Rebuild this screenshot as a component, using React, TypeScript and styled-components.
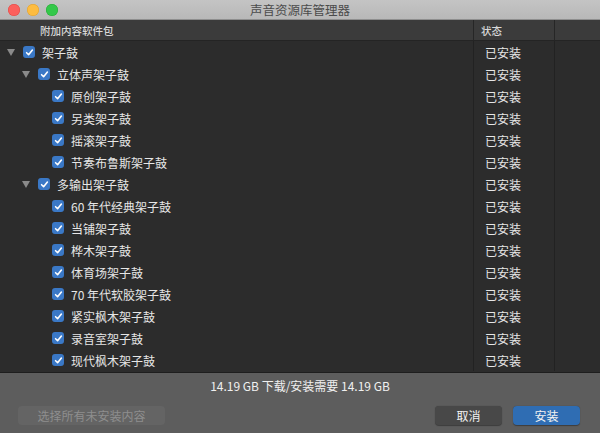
import React from "react";
import styled, { createGlobalStyle } from "styled-components";

const Global = createGlobalStyle`
  html, body { margin: 0; padding: 0; background: #2b2b2b; }
  body { font-family: "Noto Sans CJK SC", "Noto Sans", sans-serif; }
`;

const Window = styled.div`
  width: 600px;
  height: 433px;
  display: flex;
  flex-direction: column;
  overflow: hidden;
  background: #2c2c2c;
`;

const TitleBar = styled.div`
  height: 20px;
  flex: none;
  display: flex;
  align-items: center;
  position: relative;
  background: linear-gradient(#c4c4c4, #b8b8b8);
  border-bottom: 1px solid #8e8e8e;
  box-sizing: border-box;
`;

const Lights = styled.div`
  display: flex;
  gap: 7px;
  padding-left: 8px;
`;

const Light = styled.span<{ $c: string; $b: string }>`
  width: 12px;
  height: 12px;
  border-radius: 50%;
  background: ${(p) => p.$c};
  box-shadow: inset 0 0 0 0.5px ${(p) => p.$b};
`;

const Title = styled.div`
  position: absolute;
  left: 0;
  right: 0;
  text-align: center;
  font-size: 12.5px;
  color: #4b4b4b;
  pointer-events: none;
`;

const Grid = styled.div`
  display: grid;
  grid-template-columns: 474px 81px 1fr;
`;

const Header = styled(Grid)`
  height: 21px;
  flex: none;
  background: #3b3b3b;
  border-bottom: 1px solid #242424;
  box-sizing: border-box;
`;

const HeadCell = styled.div<{ $pad: number; $line?: boolean }>`
  display: flex;
  align-items: center;
  padding-left: ${(p) => p.$pad}px;
  font-size: 10.5px;
  font-weight: 500;
  color: #d8d8d8;
  border-right: ${(p) => (p.$line ? "1px solid #262626" : "none")};
`;

const List = styled.div`
  flex: 1;
  overflow: hidden;
  background: #2c2c2c;
  position: relative;
`;

const Row = styled(Grid)`
  height: 22px;
`;

const NameCell = styled.div<{ $level: number }>`
  display: flex;
  align-items: center;
  padding-left: ${(p) => 7 + Math.round(p.$level * 14.5)}px;
  border-right: 1px solid #222;
  font-size: 12px;
  color: #e6e6e6;
`;

const StatusCell = styled.div`
  display: flex;
  align-items: center;
  padding-left: 11px;
  border-right: 1px solid #222;
  font-size: 12px;
  color: #e6e6e6;
`;

const Disclosure = styled.span<{ $show: boolean }>`
  width: 0;
  height: 0;
  border-left: 4.5px solid transparent;
  border-right: 4.5px solid transparent;
  border-top: 7px solid #8a8a8a;
  margin-right: 8px;
  visibility: ${(p) => (p.$show ? "visible" : "hidden")};
  flex: none;
`;

const Box = styled.span`
  width: 12px;
  height: 12px;
  border-radius: 3px;
  background: #3a78c6;
  display: flex;
  align-items: center;
  justify-content: center;
  margin-right: 7px;
  flex: none;
`;

const Footer = styled.div`
  height: 61px;
  flex: none;
  background: #5d5d5d;
  border-top: 1px solid #1e1e1e;
  box-sizing: border-box;
  display: flex;
  flex-direction: column;
  padding: 4px 20px 0 18px;
`;

const Summary = styled.div`
  text-align: center;
  font-size: 12px;
  color: #f0f0f0;
  line-height: 18px;
  padding-left: 2px;
`;

const Buttons = styled.div`
  display: flex;
  align-items: center;
  margin-top: 11px;
`;

const Button = styled.button<{ $kind: "disabled" | "normal" | "primary" }>`
  height: 19px;
  border: none;
  border-radius: 4px;
  font-family: inherit;
  font-size: 12px;
  padding: 0;
  line-height: 19px;
  background: ${(p) =>
    p.$kind === "primary" ? "#2f6db3" : p.$kind === "normal" ? "#484848" : "#646464"};
  color: ${(p) => (p.$kind === "disabled" ? "#8e8e8e" : "#f2f2f2")};
  box-shadow: ${(p) =>
    p.$kind === "disabled" ? "none" : "0 0.5px 1px rgba(0,0,0,0.35)"};
`;

const Spacer = styled.div`
  flex: 1;
`;

type Item = { name: string; level: number; parent?: boolean };

const items: Item[] = [
  { name: "架子鼓", level: 0, parent: true },
  { name: "立体声架子鼓", level: 1, parent: true },
  { name: "原创架子鼓", level: 2 },
  { name: "另类架子鼓", level: 2 },
  { name: "摇滚架子鼓", level: 2 },
  { name: "节奏布鲁斯架子鼓", level: 2 },
  { name: "多输出架子鼓", level: 1, parent: true },
  { name: "60 年代经典架子鼓", level: 2 },
  { name: "当铺架子鼓", level: 2 },
  { name: "桦木架子鼓", level: 2 },
  { name: "体育场架子鼓", level: 2 },
  { name: "70 年代软胶架子鼓", level: 2 },
  { name: "紧实枫木架子鼓", level: 2 },
  { name: "录音室架子鼓", level: 2 },
  { name: "现代枫木架子鼓", level: 2 },
];

const Check = () => (
  <svg width="9" height="9" viewBox="0 0 9 9">
    <path d="M1.6 4.7 L3.6 6.7 L7.4 2" fill="none" stroke="#fff" strokeWidth="1.6" strokeLinecap="round" strokeLinejoin="round" />
  </svg>
);

export default function App() {
  return (
    <Window>
      <Global />
      <TitleBar>
        <Lights>
          <Light $c="#fc605c" $b="#de4a46" />
          <Light $c="#fdbc40" $b="#dea030" />
          <Light $c="#34c84a" $b="#27aa36" />
        </Lights>
        <Title>声音资源库管理器</Title>
      </TitleBar>
      <Header>
        <HeadCell $pad={40} $line>附加内容软件包</HeadCell>
        <HeadCell $pad={7} $line>状态</HeadCell>
        <HeadCell $pad={0} />
      </Header>
      <List>
        {items.map((it) => (
          <Row key={it.name}>
            <NameCell $level={it.level}>
              <Disclosure $show={!!it.parent} />
              <Box>
                <Check />
              </Box>
              {it.name}
            </NameCell>
            <StatusCell>已安装</StatusCell>
            <div />
          </Row>
        ))}
      </List>
      <Footer>
        <Summary>14.19 GB 下载/安装需要 14.19 GB</Summary>
        <Buttons>
          <Button $kind="disabled" style={{ width: 147 }}>选择所有未安装内容</Button>
          <Spacer />
          <Button $kind="normal" style={{ width: 67 }}>取消</Button>
          <Button $kind="primary" style={{ width: 67, marginLeft: 11 }}>安装</Button>
        </Buttons>
      </Footer>
    </Window>
  );
}
